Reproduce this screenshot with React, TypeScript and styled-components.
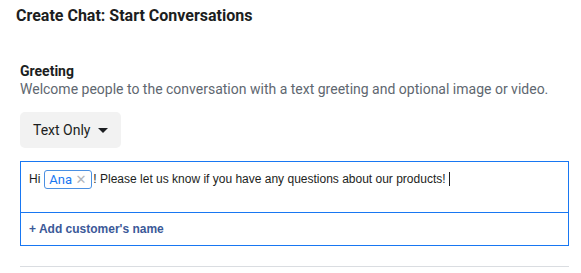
import styled, { createGlobalStyle } from "styled-components";

const GlobalStyle = createGlobalStyle`
  body {
    margin: 0;
    background: #ffffff;
    font-family: Roboto, "Liberation Sans", sans-serif;
    color: #1c1e21;
  }
`;

const Page = styled.div`
  width: 581px;
  height: 273px;
  overflow: hidden;
`;

const Title = styled.h1`
  margin: 0;
  padding: 6px 16px 0;
  font-size: 16px;
  line-height: 20px;
  font-weight: 700;
  color: #1c1e21;
`;

const Section = styled.section`
  padding: 36px 12px 0 20px;
  display: flex;
  flex-direction: column;
`;

const Label = styled.div`
  font-size: 14px;
  line-height: 18px;
  font-weight: 700;
  color: #1c1e21;
`;

const Description = styled.div`
  font-size: 14px;
  line-height: 19px;
  color: #606770;
`;

const Dropdown = styled.button`
  align-self: flex-start;
  margin-top: 13px;
  height: 36px;
  padding: 0 13px;
  display: flex;
  align-items: center;
  gap: 7px;
  border: none;
  border-radius: 5px;
  background: #f2f2f2;
  font-family: Roboto, "Liberation Sans", sans-serif;
  font-size: 14px;
  color: #1c1e21;
`;

const Caret = styled.span`
  width: 0;
  height: 0;
  border-left: 5px solid transparent;
  border-right: 5px solid transparent;
  border-top: 5px solid #1c1e21;
`;

const Editor = styled.div`
  margin-top: 13px;
  border: 1px solid #1877f2;
`;

const TextArea = styled.div`
  box-sizing: border-box;
  height: 51px;
  padding: 7px 8px 0;
  font-family: "Liberation Sans", Arial, sans-serif;
  font-size: 12px;
  color: #1c1e21;
  border-bottom: 1px solid #1877f2;
  white-space: nowrap;
`;

const Line = styled.div`
  display: flex;
  align-items: center;
  height: 20px;
`;

const Chip = styled.span`
  display: inline-flex;
  align-items: center;
  justify-content: space-between;
  box-sizing: border-box;
  width: 48px;
  height: 19px;
  margin: 0 1px 0 4px;
  padding: 0 5px 0 4px;
  border: 1px solid #4a90e2;
  border-radius: 3px;
  color: #1877f2;
  font-family: Roboto, "Liberation Sans", sans-serif;
  font-size: 13px;
`;

const ChipClose = styled.span`
  color: #b0b5bb;
  font-family: "DejaVu Sans", sans-serif;
  font-size: 13px;
  font-weight: 700;
`;

const Cursor = styled.span`
  display: inline-block;
  width: 1px;
  height: 14px;
  margin-left: 3px;
  background: #1c1e21;
`;

const Footer = styled.div`
  height: 32px;
  padding: 0 8px;
  display: flex;
  align-items: center;
`;

const AddLink = styled.a`
  font-family: "Liberation Sans", Arial, sans-serif;
  font-size: 12px;
  font-weight: 700;
  color: #3b5998;
  text-decoration: none;
`;

const Divider = styled.hr`
  margin: 20px 0 0;
  border: none;
  border-top: 1px solid #dadde1;
`;

export default function App() {
  return (
    <Page>
      <GlobalStyle />
      <Title>Create Chat: Start Conversations</Title>
      <Section>
        <Label>Greeting</Label>
        <Description>
          Welcome people to the conversation with a text greeting and optional image or video.
        </Description>
        <Dropdown>
          Text Only <Caret />
        </Dropdown>
        <Editor>
          <TextArea>
            <Line>
              Hi
              <Chip>
                Ana <ChipClose>✕</ChipClose>
              </Chip>
              ! Please let us know if you have any questions about our products!
              <Cursor />
            </Line>
          </TextArea>
          <Footer>
            <AddLink href="#">+ Add customer's name</AddLink>
          </Footer>
        </Editor>
        <Divider />
      </Section>
    </Page>
  );
}
